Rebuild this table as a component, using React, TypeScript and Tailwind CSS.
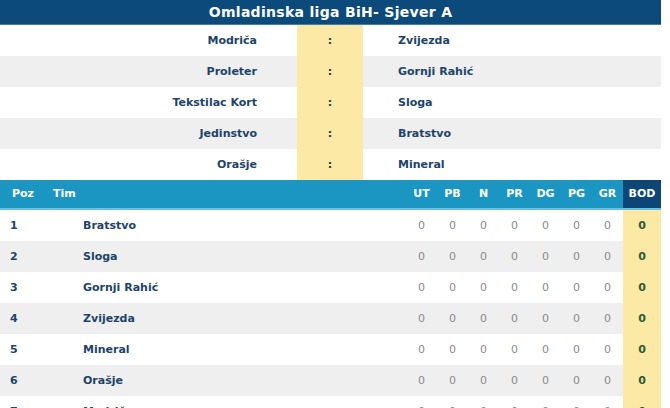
import React from 'react';

const fixtures = [
  ['Modriča', 'Zvijezda'],
  ['Proleter', 'Gornji Rahić'],
  ['Tekstilac Kort', 'Sloga'],
  ['Jedinstvo', 'Bratstvo'],
  ['Orašje', 'Mineral'],
];

const teams = ['Bratstvo', 'Sloga', 'Gornji Rahić', 'Zvijezda', 'Mineral', 'Orašje', 'Modriča'];
const cols = ['UT', 'PB', 'N', 'PR', 'DG', 'PG', 'GR'];

export default function App() {
  return (
    <div className="w-[670px] h-[408px] overflow-hidden bg-white font-['DejaVu_Sans',sans-serif]">
      <div className="w-[661px]">
        {/* Title */}
        <div className="h-[25px] bg-[#0b4a7a] border-b border-[#3d7fae] flex items-center justify-center text-white text-[14px] font-bold tracking-[0.3px]">
          Omladinska liga BiH- Sjever A
        </div>

        {/* Fixtures */}
        {fixtures.map(([home, away], i) => (
          <div key={i} className={`flex h-[31px] items-center text-[11px] font-bold text-[#1d4369] ${i % 2 ? 'bg-[#efefef]' : 'bg-white'}`}>
            <div className="w-[297px] text-right pr-[40px] pt-[2px]">{home}</div>
            <div className="w-[66px] h-full bg-[#fde9a6] flex items-center justify-center pt-[2px] text-[#333]">:</div>
            <div className="flex-1 pl-[35px] pt-[2px]">{away}</div>
          </div>
        ))}

        {/* Standings header */}
        <div className="flex h-[30px] bg-[#1b96c3] border-b-2 border-[#6cc0df] text-white text-[11px] font-bold">
          <div className="w-[53px] pl-[12px] flex items-center">Poz</div>
          <div className="flex-1 flex items-center">Tim</div>
          {cols.map((c) => (
            <div key={c} className="w-[31px] flex items-center justify-center">{c}</div>
          ))}
          <div className="w-[38px] bg-[#0d4676] flex items-center justify-center">BOD</div>
        </div>

        {/* Standings rows */}
        {teams.map((t, i) => (
          <div key={t} className={`flex h-[31px] pt-[2px] text-[11px] ${i % 2 ? 'bg-[#efefef]' : 'bg-white'}`}>
            <div className="w-[83px] pl-[10px] flex items-center font-bold text-[#1d4369]">{i + 1}</div>
            <div className="flex-1 flex items-center font-bold text-[#1d4369]">{t}</div>
            {cols.map((c) => (
              <div key={c} className="w-[31px] flex items-center justify-center text-[#8a8a8a]">0</div>
            ))}
            <div className="w-[38px] -mt-[2px] bg-[#fde9a6] flex items-center justify-center pt-[2px] font-bold text-[#2e5a35]">0</div>
          </div>
        ))}
      </div>
    </div>
  );
}
